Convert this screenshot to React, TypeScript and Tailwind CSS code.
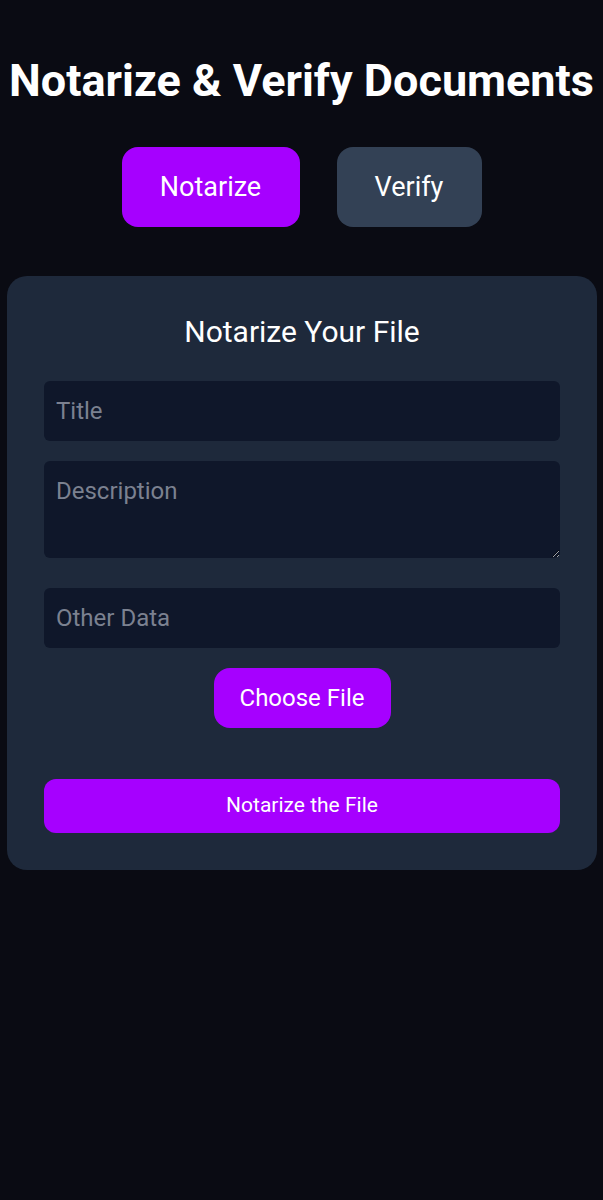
import React, {useState} from "react";

const App: React.FC = () => {
  const [tab, setTab] = useState<"notarize" | "verify">("notarize");

  return (
    <div
      className="min-h-[1200px] bg-[#0a0b13] pt-[57px] text-white"
      style={{fontFamily: "Roboto, 'Liberation Sans', sans-serif"}}
    >
      <h1 className="whitespace-nowrap text-center text-[45px] leading-[48px] font-bold">
        Notarize &amp; Verify Documents
      </h1>

      {/* Tab buttons */}
      <div className="mt-[42px] flex justify-center gap-[37px]">
        <button
          onClick={() => setTab("notarize")}
          className={`h-[80px] w-[178px] rounded-2xl text-[27px] ${
            tab === "notarize" ? "bg-[#a600ff]" : "bg-[#334155]"
          }`}
        >
          Notarize
        </button>
        <button
          onClick={() => setTab("verify")}
          className={`h-[80px] w-[145px] rounded-2xl text-[27px] ${
            tab === "verify" ? "bg-[#a600ff]" : "bg-[#334155]"
          }`}
        >
          Verify
        </button>
      </div>

      {/* Form card */}
      <div className="mx-[7px] mt-[49px] w-[590px] rounded-[20px] bg-[#1e293b] px-[37px] pt-[38px] pb-[37px]">
        <h2 className="text-center text-[30px] leading-[36px]">Notarize Your File</h2>

        <div className="mt-[31px] flex flex-col">
          <input
            type="text"
            placeholder="Title"
            className="h-[60px] w-full rounded-md bg-[#0f172a] px-3 text-[24px] text-white placeholder:text-[#7b8190] outline-none"
          />
          <textarea
            placeholder="Description"
            className="mt-[20px] h-[97px] w-full rounded-md bg-[#0f172a] px-3 pt-[14px] text-[24px] leading-[32px] text-white placeholder:text-[#7b8190] outline-none"
          />
          <input
            type="text"
            placeholder="Other Data"
            className="mt-[30px] h-[60px] w-full rounded-md bg-[#0f172a] px-3 text-[24px] text-white placeholder:text-[#7b8190] outline-none"
          />
          <div className="mt-[20px] flex justify-center">
            <label className="flex h-[60px] w-[177px] cursor-pointer items-center justify-center rounded-2xl bg-[#a600ff] text-[24px]">
              Choose File
              <input type="file" className="hidden" />
            </label>
          </div>
          <button className="mt-[51px] h-[54px] w-full rounded-xl bg-[#a600ff] text-[21px]">
            Notarize the File
          </button>
        </div>
      </div>
    </div>
  );
};

export default App;
